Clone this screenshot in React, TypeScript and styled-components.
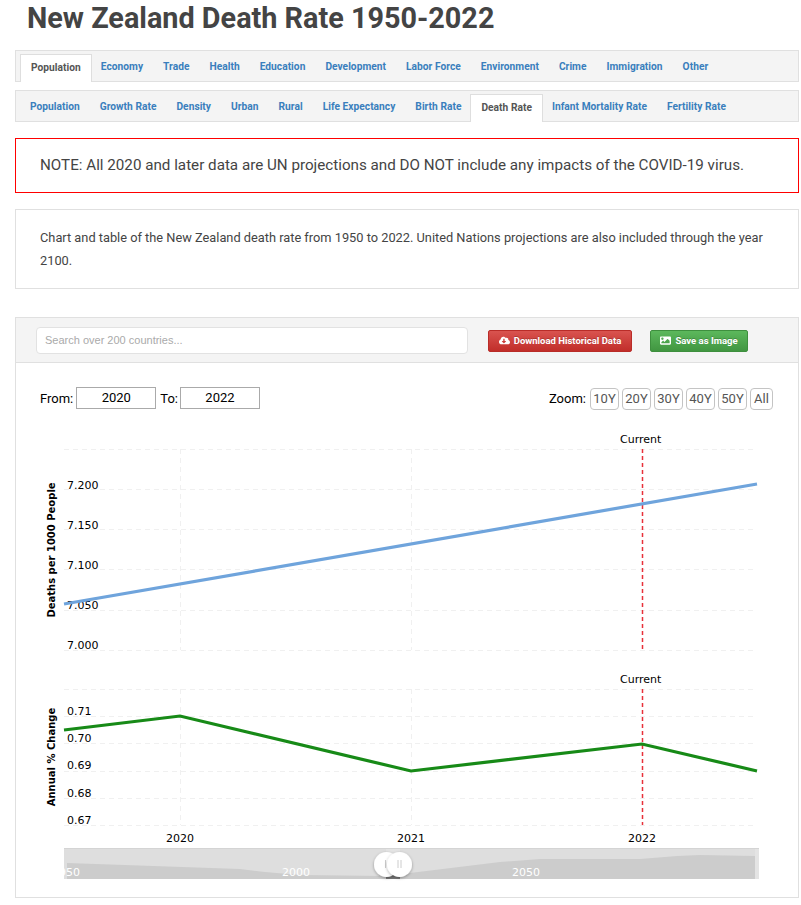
import React from "react";
import styled, { createGlobalStyle } from "styled-components";
import { FaCloudDownloadAlt, FaImage } from "react-icons/fa";

const Global = createGlobalStyle`
  html, body { margin: 0; padding: 0; background: #fff; overflow: hidden; }
  * { box-sizing: border-box; }
`;

const Page = styled.div`
  width: 801px;
  height: 905px;
  padding: 0 2px 0 15px;
  font-family: Roboto, "Liberation Sans", sans-serif;
  color: #444;
  overflow: hidden;
`;

const Title = styled.h1`
  margin: 0 0 14px;
  height: 36px;
  padding-left: 12px;
  font: 700 28.8px/36px Roboto, sans-serif;
  color: #444;
`;

const TabBar = styled.nav<{ $last?: boolean }>`
  display: flex;
  align-items: flex-end;
  height: 32px;
  margin-bottom: ${(p) => (p.$last ? 16 : 8)}px;
  padding: 0 4px;
  background: #f4f4f4;
  border: 1px solid #e0e0e0;
`;

const Tab = styled.a<{ $active?: boolean }>`
  display: flex;
  align-items: center;
  justify-content: center;
  height: ${(p) => (p.$active ? 28 : 30)}px;
  padding: ${(p) => (p.$active ? "0 10px" : "3px 10px 0")};
  margin: 0 ${(p) => (p.$active ? -1 : 0)}px ${(p) => (p.$active ? -1 : 0)}px ${(p) => (p.$active ? -1 : 0)}px;
  font: 700 10.2px/1 Roboto, sans-serif;
  letter-spacing: 0.03px;
  white-space: nowrap;
  color: ${(p) => (p.$active ? "#555" : "#3a7fbd")};
  background: ${(p) => (p.$active ? "#fff" : "transparent")};
  border: ${(p) => (p.$active ? "1px solid #dedede" : "none")};
  border-bottom: none;
  &:first-child { margin-left: 0; }
`;

const Note = styled.div`
  display: flex;
  align-items: center;
  height: 55px;
  margin-bottom: 16px;
  padding: 0 24px 1px;
  font-size: 15.2px;
  color: #444;
  border: 1px solid #f00;
`;

const Description = styled.p`
  height: 80px;
  margin: 0 0 28px;
  padding: 16px 24px 0;
  font-size: 12.8px;
  line-height: 23px;
  color: #444;
  border: 1px solid #e0e0e0;
`;

const ChartPanel = styled.section`
  height: 581px;
  border: 1px solid #e0e0e0;
`;

const Toolbar = styled.div`
  display: flex;
  align-items: center;
  height: 45px;
  padding: 0 20px;
  background: #f4f4f4;
  border-bottom: 1px solid #e0e0e0;
`;

const Search = styled.input`
  width: 432px;
  height: 27px;
  padding: 0 8px;
  margin-right: 20px;
  font: 11px "Liberation Sans", sans-serif;
  background: #fff;
  border: 1px solid #e2e2e2;
  border-radius: 4px;
  &::placeholder { color: #aaa; opacity: 1; }
`;

const ActionButton = styled.button<{ $color: "red" | "green" }>`
  display: flex;
  align-items: center;
  justify-content: center;
  gap: 4px;
  height: 22px;
  padding: 0;
  margin: 1px 18px 0 0;
  width: ${(p) => (p.$color === "red" ? 144 : 98)}px;
  font: 700 9.5px/1 Roboto, sans-serif;
  color: #fff;
  text-shadow: 0 -1px 0 rgba(0, 0, 0, 0.2);
  border-radius: 2px;
  border: 1px solid ${(p) => (p.$color === "red" ? "#b92c28" : "#3e8f3e")};
  background: ${(p) =>
    p.$color === "red"
      ? "linear-gradient(#d9534f, #c12e2a)"
      : "linear-gradient(#5cb85c, #419641)"};
`;

const Controls = styled.div`
  display: flex;
  align-items: center;
  justify-content: space-between;
  height: 23px;
  margin: 24px 25px 0 24px;
  font: 13px Roboto, "Liberation Sans", sans-serif;
  color: #000;
`;

const Range = styled.div`
  display: flex;
  align-items: center;
  gap: 3px;
`;

const ToLabel = styled.span`
  margin-right: -1px;
`;

const YearBox = styled.input`
  width: 80px;
  height: 22px;
  padding: 0;
  margin: 0 1px 2px 0;
  text-align: center;
  font: 13px Roboto, "Liberation Sans", sans-serif;
  color: #000;
  border: 1px solid #aaa;
`;

const ZoomGroup = styled.div`
  display: flex;
  align-items: center;
  gap: 3px;
`;

const ZoomLabel = styled.span`
  margin-right: 1px;
`;

const ZoomButton = styled.button<{ $wide?: boolean }>`
  width: ${(p) => (p.$wide ? 23 : 29)}px;
  height: 22px;
  padding: 0;
  font: 13px Roboto, "Liberation Sans", sans-serif;
  color: #555;
  background: #fff;
  border: 1px solid #c4c4c4;
  border-radius: 4px;
`;

const ChartSvg = styled.svg`
  display: block;
  width: 782px;
  height: 472px;
  margin-top: 15px;
`;

const AxisText = styled.text`
  font: 11px "DejaVu Sans", Verdana, sans-serif;
  fill: #000;
`;

const AxisTitle = styled.text`
  font: 700 10px "DejaVu Sans", Verdana, sans-serif;
  fill: #000;
  text-anchor: middle;
`;

const NavText = styled.text`
  font: 11px "DejaVu Sans", Verdana, sans-serif;
  fill: #fff;
  text-anchor: middle;
`;

const tabs1 = ["Population", "Economy", "Trade", "Health", "Education", "Development", "Labor Force", "Environment", "Crime", "Immigration", "Other"];
const tabs2 = ["Population", "Growth Rate", "Density", "Urban", "Rural", "Life Expectancy", "Birth Rate", "Death Rate", "Infant Mortality Rate", "Fertility Rate"];
const zooms = ["10Y", "20Y", "30Y", "40Y", "50Y", "All"];
const X0 = 64;
const X1 = 757;
const years = [
  { x: 180, label: "2020" },
  { x: 411, label: "2021" },
  { x: 642, label: "2022" },
];
const topGrid = [449.5, 489.5, 529.5, 569.5, 610.5, 650.5];
const topLabels = [
  { y: 489, t: "7.200" },
  { y: 529, t: "7.150" },
  { y: 569, t: "7.100" },
  { y: 609, t: "7.050" },
  { y: 649, t: "7.000" },
];
const lowGrid = [689.5, 716.5, 743.5, 771.5, 798.5, 825.5];
const lowLabels = [
  { y: 715, t: "0.71" },
  { y: 742, t: "0.70" },
  { y: 769, t: "0.69" },
  { y: 797, t: "0.68" },
  { y: 824, t: "0.67" },
];

const Chart = () => (
  <ChartSvg viewBox="16 425 782 472">
    <defs>
      <clipPath id="nav">
        <rect x={64} y={848} width={695} height={31} />
      </clipPath>
      <filter id="shadow" x="-40%" y="-40%" width="180%" height="180%">
        <feDropShadow dx="0" dy="1" stdDeviation="1.5" floodColor="#000" floodOpacity="0.35" />
      </filter>
    </defs>
    {[...topGrid, ...lowGrid].map((y) => (
      <line key={y} x1={X0} x2={X1} y1={y} y2={y} stroke="#f0f0f0" strokeDasharray="5 4" />
    ))}
    {years.slice(0, 2).map((d) => (
      <g key={d.x}>
        <line x1={d.x + 0.5} x2={d.x + 0.5} y1={449} y2={650} stroke="#f0f0f0" strokeDasharray="5 4" />
        <line x1={d.x + 0.5} x2={d.x + 0.5} y1={689} y2={825} stroke="#f0f0f0" strokeDasharray="5 4" />
      </g>
    ))}
    <line x1={642.5} x2={642.5} y1={449} y2={650} stroke="#e8303a" strokeWidth={1.5} strokeDasharray="4 3" />
    <line x1={642.5} x2={642.5} y1={689} y2={825} stroke="#e8303a" strokeWidth={1.5} strokeDasharray="4 3" />
    <AxisText x={620} y={443}>Current</AxisText>
    <AxisText x={620} y={683}>Current</AxisText>
    {topLabels.map((l) => (
      <AxisText key={l.t} x={67} y={l.y}>{l.t}</AxisText>
    ))}
    {lowLabels.map((l) => (
      <AxisText key={l.t} x={67} y={l.y}>{l.t}</AxisText>
    ))}
    <AxisTitle transform="translate(54.5 550) rotate(-90)">Deaths per 1000 People</AxisTitle>
    <AxisTitle transform="translate(54.5 757) rotate(-90)">Annual % Change</AxisTitle>
    <polyline points="64,604 757,484" fill="none" stroke="#6fa4dc" strokeWidth={3.2} />
    <polyline points="64,730 180,716 411,771 642,744 757,771" fill="none" stroke="#178a17" strokeWidth={3.2} />
    {years.map((d) => (
      <AxisText key={d.label} x={d.x - 14} y={842}>{d.label}</AxisText>
    ))}
    <g clipPath="url(#nav)">
      <rect x={64} y={848} width={695} height={31} fill="#dedede" />
      <path
        d="M67 863 L240 869 L265 872 L300 875 L385 876 L410 873 L500 862 L540 859 L640 859 L677 856 L700 855 L755 856 L755 879 L67 879 Z"
        fill="#cccccc"
      />
      <rect x={755} y={848} width={4} height={31} fill="#e4e4e4" />
      <rect x={386} y={848} width={14} height={31} fill="#e8e8e8" opacity={0.6} />
      <rect x={386} y={875} width={14} height={4} fill="#777" />
      <NavText x={296} y={876}>2000</NavText>
      <NavText x={526} y={876}>2050</NavText>
      <NavText x={66} y={876}>1950</NavText>
    </g>
    <rect x={64} y={848} width={695} height={1} fill="#d4d4d4" />
    <g filter="url(#shadow)">
      <circle cx={386.5} cy={864.5} r={12.5} fill="#fff" />
    </g>
    <path d="M385.5 860 V868 M388.5 860 V868" stroke="#ccc" />
    <g filter="url(#shadow)">
      <circle cx={399.5} cy={864.5} r={12.5} fill="#fff" />
    </g>
    <path d="M398 860 V868 M401 860 V868" stroke="#ccc" />
  </ChartSvg>
);

export default function App() {
  return (
    <Page>
      <Global />
      <Title>New Zealand Death Rate 1950-2022</Title>
      <TabBar>
        {tabs1.map((t, i) => (
          <Tab key={t} $active={i === 0}>{t}</Tab>
        ))}
      </TabBar>
      <TabBar $last>
        {tabs2.map((t) => (
          <Tab key={t} $active={t === "Death Rate"}>{t}</Tab>
        ))}
      </TabBar>
      <Note>NOTE: All 2020 and later data are UN projections and DO NOT include any impacts of the COVID-19 virus.</Note>
      <Description>
        Chart and table of the New Zealand death rate from 1950 to 2022. United Nations projections are also included through the year 2100.
      </Description>
      <ChartPanel>
        <Toolbar>
          <Search placeholder="Search over 200 countries..." />
          <ActionButton $color="red"><FaCloudDownloadAlt size={11} />Download Historical Data</ActionButton>
          <ActionButton $color="green"><FaImage size={11} />Save as Image</ActionButton>
        </Toolbar>
        <Controls>
          <Range>
            <span>From:</span>
            <YearBox defaultValue="2020" />
            <ToLabel>To:</ToLabel>
            <YearBox defaultValue="2022" />
          </Range>
          <ZoomGroup>
            <ZoomLabel>Zoom:</ZoomLabel>
            {zooms.map((z) => (
              <ZoomButton key={z} $wide={z === "All"}>{z}</ZoomButton>
            ))}
          </ZoomGroup>
        </Controls>
        <Chart />
      </ChartPanel>
    </Page>
  );
}
